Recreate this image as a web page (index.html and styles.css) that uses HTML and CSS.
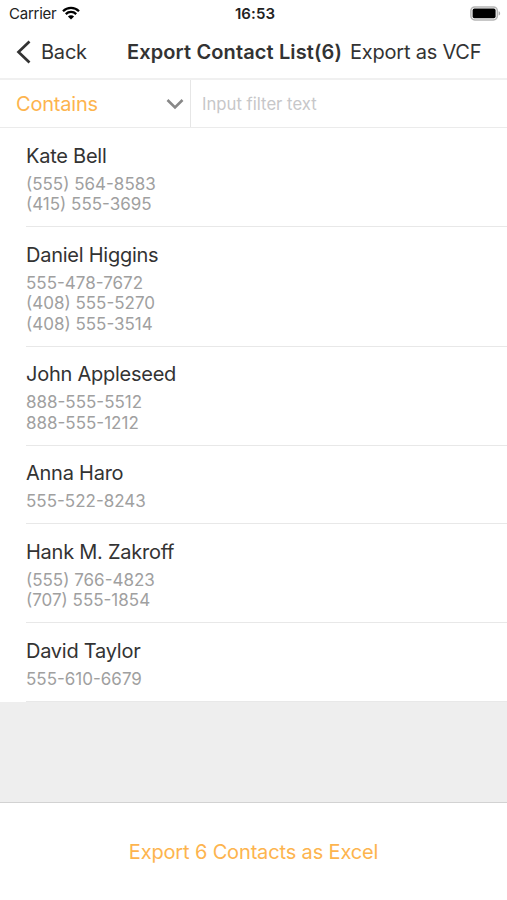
FILE: index.html
```html
<!DOCTYPE html>
<html lang="en">
<head>
    <meta charset="UTF-8">
    <meta name="viewport" content="width=device-width, initial-scale=1.0">
    <title>Export Contact List</title>
    <link rel="stylesheet" href="styles.css">
</head>
<body>
    <div class="status-bar">
        <div class="carrier">
            <span>Carrier</span>
            <svg class="wifi" width="18" height="14" viewBox="0 0 18 14">
                <path d="M1 5.2a11.4 11.4 0 0 1 16 0M3.8 8.1a7.4 7.4 0 0 1 10.4 0" fill="none" stroke="#000" stroke-width="2.3"/>
                <path d="M9 13.6 5.9 10.5a4.4 4.4 0 0 1 6.2 0z"/>
            </svg>
        </div>
        <div class="time">16:53</div>
        <svg class="battery" width="31" height="15" viewBox="0 0 31 15">
            <rect x=".9" y=".9" width="26.4" height="13" rx="3.8" fill="#fff" stroke="#b5b5b5" stroke-width="1.5"/>
            <rect x="2.6" y="2.6" width="23" height="9.6" rx="1.8"/>
            <path d="M28.6 5.2c2 .6 2 3.8 0 4.4z" fill="#aaa"/>
        </svg>
    </div>

    <div class="nav-bar">
        <a class="back">
            <svg width="16" height="24" viewBox="0 0 16 24">
                <path d="M13.5 1.5 2.5 12l11 10.500" fill="none" stroke="#333" stroke-width="2.7"/>
            </svg>
            <span class="back-text">Back</span>
        </a>
        <h1>Export Contact List(6)</h1>
        <a class="vcf">Export as VCF</a>
    </div>

    <div class="filter">
        <div class="filter-type">
            <span class="filter-label">Contains</span>
            <svg width="18" height="12" viewBox="0 0 18 12">
                <path d="M1.5 2 9 9.5 16.5 2" fill="none" stroke="#888" stroke-width="2.6"/>
            </svg>
        </div>
        <input type="text" class="filter-input" placeholder="Input filter text">
    </div>

    <div class="contacts">
        <div class="contact">
            <div class="name">Kate Bell</div>
            <div class="phone">(555) 564-8583</div>
            <div class="phone">(415) 555-3695</div>
        </div>
        <div class="contact">
            <div class="name">Daniel Higgins</div>
            <div class="phone">555-478-7672</div>
            <div class="phone">(408) 555-5270</div>
            <div class="phone">(408) 555-3514</div>
        </div>
        <div class="contact">
            <div class="name">John Appleseed</div>
            <div class="phone">888-555-5512</div>
            <div class="phone">888-555-1212</div>
        </div>
        <div class="contact">
            <div class="name">Anna Haro</div>
            <div class="phone">555-522-8243</div>
        </div>
        <div class="contact">
            <div class="name">Hank M. Zakroff</div>
            <div class="phone">(555) 766-4823</div>
            <div class="phone">(707) 555-1854</div>
        </div>
        <div class="contact">
            <div class="name">David Taylor</div>
            <div class="phone">555-610-6679</div>
        </div>
    </div>

    <div class="footer"><a class="export">Export 6 Contacts as Excel</a></div>
</body>
</html>
```
FILE: styles.css
```css
* { box-sizing: border-box; }
body { font-family: Inter, "Liberation Sans", sans-serif; margin: 0; height: 900px; display: flex; flex-direction: column; background: #eee; color: #333; overflow: hidden; }
svg { display: block; flex: none; }
.status-bar { height: 27px; padding: 0 6px 0 9px; background: #fff; display: grid; grid-template-columns: 1fr auto 1fr; align-items: center; color: #222; }
.carrier { display: flex; align-items: center; gap: 6px; font-size: 15px; letter-spacing: -0.25px; }
.wifi { margin-top: -2px; }
.time { font-size: 15px; font-weight: 600; letter-spacing: 0.1px; }
.battery { justify-self: end; }
.nav-bar { height: 53px; padding: 0 25px 1px 16px; background: #fff; border-bottom: 2px solid #f0f0f0; display: flex; align-items: center; font-size: 20px; letter-spacing: -0.22px; white-space: nowrap; }
.back { display: flex; align-items: center; gap: 9px; width: 110px; }
h1 { margin: 0 0 0 1px; font-size: 20px; font-weight: 600; letter-spacing: 0.12px; width: 223px; }
.filter { height: 48px; background: #fff; border-bottom: 1px solid #ebebeb; display: flex; }
.filter-type { width: 191px; padding: 0 6px 0 16px; border-right: 1px solid #e6e6e6; display: flex; align-items: center; justify-content: space-between; color: #fdb44e; font-size: 20px; letter-spacing: -0.2px; }
.filter-input { flex: 1; min-width: 0; border: 0; padding: 0 11px; font-family: inherit; font-size: 16.7px; background: none; }
.filter-input::placeholder { color: #c7c7c9; }
.contacts { background: #fff; }
.contact { margin-left: 26px; padding: 14.5px 0 11.5px; border-bottom: 1px solid #e8e8e8; }
.name { font-size: 20px; line-height: 27px; margin-bottom: 4px; letter-spacing: -0.25px; }
.phone { font-size: 17px; line-height: 20.5px; color: #a0a0a0; }
.footer { margin-top: auto; height: 98px; background: #fff; border-top: 1px solid #d2d2d2; display: flex; justify-content: center; padding-top: 37px; font-size: 20px; line-height: 24px; letter-spacing: -0.15px; color: #fdb44e; }
```
